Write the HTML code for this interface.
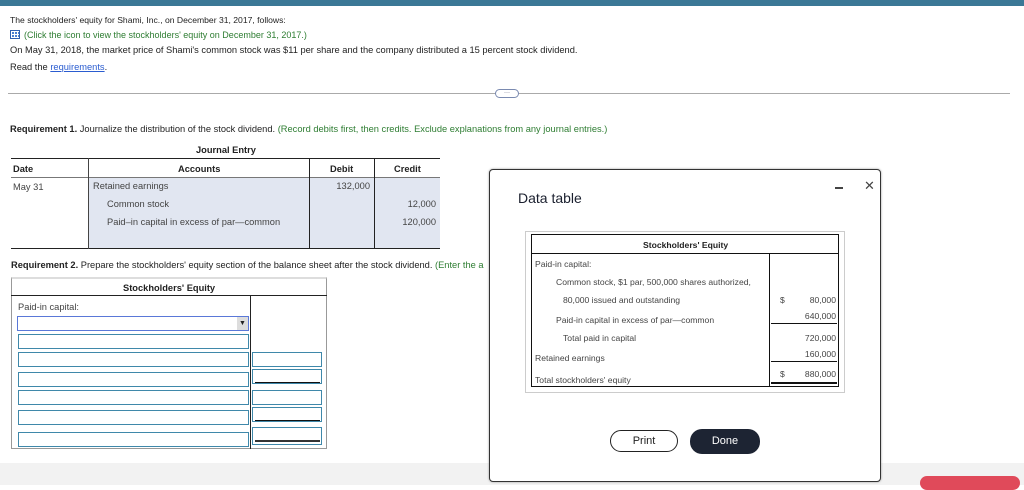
<!DOCTYPE html>
<html><head><style>
*{margin:0;padding:0;box-sizing:border-box}
body{width:1024px;height:485px;overflow:hidden;background:#fff;font-family:"Liberation Sans",Arial,sans-serif;font-size:9.3px;color:#222;position:relative}
.a{position:absolute;white-space:nowrap}
.g{color:#2e7d32}
.b{font-weight:bold}
.in{position:absolute;border:1px solid #3f88aa;background:#fff;height:15px}
.m{font-size:8.6px;color:#444}
.r{width:45px;text-align:right}
</style></head><body>
<div class="a" style="left:0;top:0;width:1024px;height:6px;background:#3b7896"></div>
<div class="a" style="left:10px;top:15px;font-size:8.6px">The stockholders' equity for Shami, Inc., on December 31, 2017, follows:</div>
<div class="a" style="left:10px;top:30px;width:10px;height:9px;background:#4a7fd0;border:1px solid #3060b0;background-image:linear-gradient(#fff 1px,transparent 1px),linear-gradient(90deg,#fff 1px,transparent 1px);background-size:3px 3px"></div>
<div class="a g" style="left:24px;top:30px;font-size:9px">(Click the icon to view the stockholders' equity on December 31, 2017.)</div>
<div class="a" style="left:10px;top:45px">On May 31, 2018, the market price of Shami's common stock was $11 per share and the company distributed a 15 percent stock dividend.</div>
<div class="a" style="left:10px;top:62px">Read the <span style="color:#2a5cd0;text-decoration:underline">requirements</span>.</div>
<div class="a" style="left:8px;top:93px;width:1002px;height:1px;background:#aaa"></div>
<div class="a" style="left:495px;top:89px;width:24px;height:9px;border:1px solid #7a8ab0;border-radius:5px;background:#fff;font-size:6px;line-height:6px;text-align:center;color:#446">···</div>
<div class="a" style="left:10px;top:124px"><span class="b">Requirement 1.</span> Journalize the distribution of the stock dividend. <span class="g">(Record debits first, then credits. Exclude explanations from any journal entries.)</span></div>
<div class="a b" style="left:196px;top:145px">Journal Entry</div>
<div class="a" style="left:11px;top:158px;width:429px;height:1px;background:#222"></div>
<div class="a" style="left:88px;top:178px;width:352px;height:71px;background:#e1e6f1"></div>
<div class="a" style="left:11px;top:177px;width:429px;height:1px;background:#777"></div>
<div class="a" style="left:11px;top:248px;width:429px;height:1px;background:#222"></div>
<div class="a" style="left:88px;top:158px;width:1px;height:91px;background:#444"></div>
<div class="a" style="left:309px;top:158px;width:1px;height:91px;background:#222"></div>
<div class="a" style="left:374px;top:158px;width:1px;height:91px;background:#222"></div>
<div class="a b" style="left:13px;top:164px">Date</div>
<div class="a b" style="left:178px;top:164px">Accounts</div>
<div class="a b" style="left:330px;top:164px">Debit</div>
<div class="a b" style="left:394px;top:164px">Credit</div>
<div class="a" style="left:13px;top:182px;color:#444">May 31</div>
<div class="a" style="left:93px;top:181px;color:#444">Retained earnings</div>
<div class="a" style="left:107px;top:199px;color:#444">Common stock</div>
<div class="a" style="left:107px;top:217px;color:#444">Paid–in capital in excess of par—common</div>
<div class="a" style="left:320px;top:181px;width:50px;text-align:right;color:#444">132,000</div>
<div class="a" style="left:386px;top:199px;width:50px;text-align:right;color:#444">12,000</div>
<div class="a" style="left:386px;top:217px;width:50px;text-align:right;color:#444">120,000</div>
<div class="a" style="left:11px;top:260px"><span class="b">Requirement 2.</span> Prepare the stockholders' equity section of the balance sheet after the stock dividend. <span class="g">(Enter the a</span></div>
<div class="a" style="left:11px;top:277px;width:316px;height:172px;border:1px solid #999;border-top:2px solid #ddd"></div>
<div class="a b" style="left:123px;top:283px">Stockholders' Equity</div>
<div class="a" style="left:11px;top:295px;width:316px;height:1px;background:#222"></div>
<div class="a" style="left:250px;top:295px;width:1px;height:154px;background:#222"></div>
<div class="a" style="left:18px;top:302px;color:#444">Paid-in capital:</div>
<div class="in" style="left:17px;top:316px;width:232px;border-color:#5a78d8"></div>
<div class="a" style="left:237px;top:317px;width:11px;height:13px;background:#ddd;font-size:7px;text-align:center;line-height:13px">▼</div>
<div class="in" style="left:18px;top:334px;width:231px"></div>
<div class="in" style="left:18px;top:352px;width:231px"></div>
<div class="in" style="left:18px;top:372px;width:231px"></div>
<div class="in" style="left:18px;top:390px;width:231px"></div>
<div class="in" style="left:18px;top:410px;width:231px"></div>
<div class="in" style="left:18px;top:432px;width:231px"></div>
<div class="in" style="left:252px;top:352px;width:70px"></div>
<div class="in" style="left:252px;top:369px;width:70px"></div><div class="a" style="left:255px;top:382px;width:65px;height:1px;background:#111"></div>
<div class="in" style="left:252px;top:390px;width:70px"></div>
<div class="in" style="left:252px;top:407px;width:70px"></div><div class="a" style="left:255px;top:420px;width:65px;height:1px;background:#111"></div>
<div class="in" style="left:252px;top:427px;width:70px;height:18px"></div><div class="a" style="left:255px;top:440px;width:65px;height:2px;background:#333"></div>
<div class="a" style="left:0;top:463px;width:1024px;height:22px;background:#f2f2f2"></div>
<div class="a" style="left:920px;top:476px;width:100px;height:14px;background:#e04a5a;border-radius:8px"></div>
<div class="a" style="left:489px;top:169px;width:392px;height:313px;border:1px solid #333;border-radius:4px;background:#fff;box-shadow:0 0 2px #999"></div>
<div class="a" style="left:518px;top:190px;font-size:14px;color:#1a1f2e">Data table</div>
<div class="a" style="left:835px;top:187px;width:8px;height:2px;background:#444"></div>
<div class="a" style="left:864px;top:178px;font-size:13px;color:#444">✕</div>
<div class="a" style="left:525px;top:231px;width:320px;height:162px;border:1px solid #ccc"></div>
<div class="a" style="left:531px;top:234px;width:308px;height:153px;border:1px solid #111"></div>
<div class="a b" style="left:643px;top:240px;font-size:8.6px">Stockholders' Equity</div>
<div class="a" style="left:531px;top:253px;width:308px;height:1px;background:#111"></div>
<div class="a" style="left:769px;top:253px;width:1px;height:134px;background:#111"></div>
<div class="a m" style="left:535px;top:259px">Paid-in capital:</div>
<div class="a m" style="left:556px;top:277px">Common stock, $1 par, 500,000 shares authorized,</div>
<div class="a m" style="left:563px;top:295px">80,000 issued and outstanding</div>
<div class="a m" style="left:556px;top:315px">Paid-in capital in excess of par—common</div>
<div class="a m" style="left:563px;top:333px">Total paid in capital</div>
<div class="a m" style="left:535px;top:353px">Retained earnings</div>
<div class="a m" style="left:535px;top:375px">Total stockholders' equity</div>
<div class="a m" style="left:780px;top:295px">$</div>
<div class="a m" style="left:780px;top:369px">$</div>
<div class="a m r" style="left:791px;top:295px">80,000</div>
<div class="a m r" style="left:791px;top:311px">640,000</div>
<div class="a" style="left:771px;top:323px;width:66px;height:1px;background:#111"></div>
<div class="a m r" style="left:791px;top:333px">720,000</div>
<div class="a m r" style="left:791px;top:349px">160,000</div>
<div class="a" style="left:771px;top:361px;width:66px;height:1px;background:#111"></div>
<div class="a m r" style="left:791px;top:369px">880,000</div>
<div class="a" style="left:771px;top:382px;width:66px;height:2px;background:#111"></div>
<div class="a" style="left:610px;top:430px;width:68px;height:22px;border:1px solid #222;border-radius:11px;text-align:center;line-height:20px;font-size:11px">Print</div>
<div class="a" style="left:690px;top:429px;width:70px;height:25px;background:#1d2433;border-radius:12px;text-align:center;line-height:25px;font-size:11px;color:#fff">Done</div>
</body></html>
